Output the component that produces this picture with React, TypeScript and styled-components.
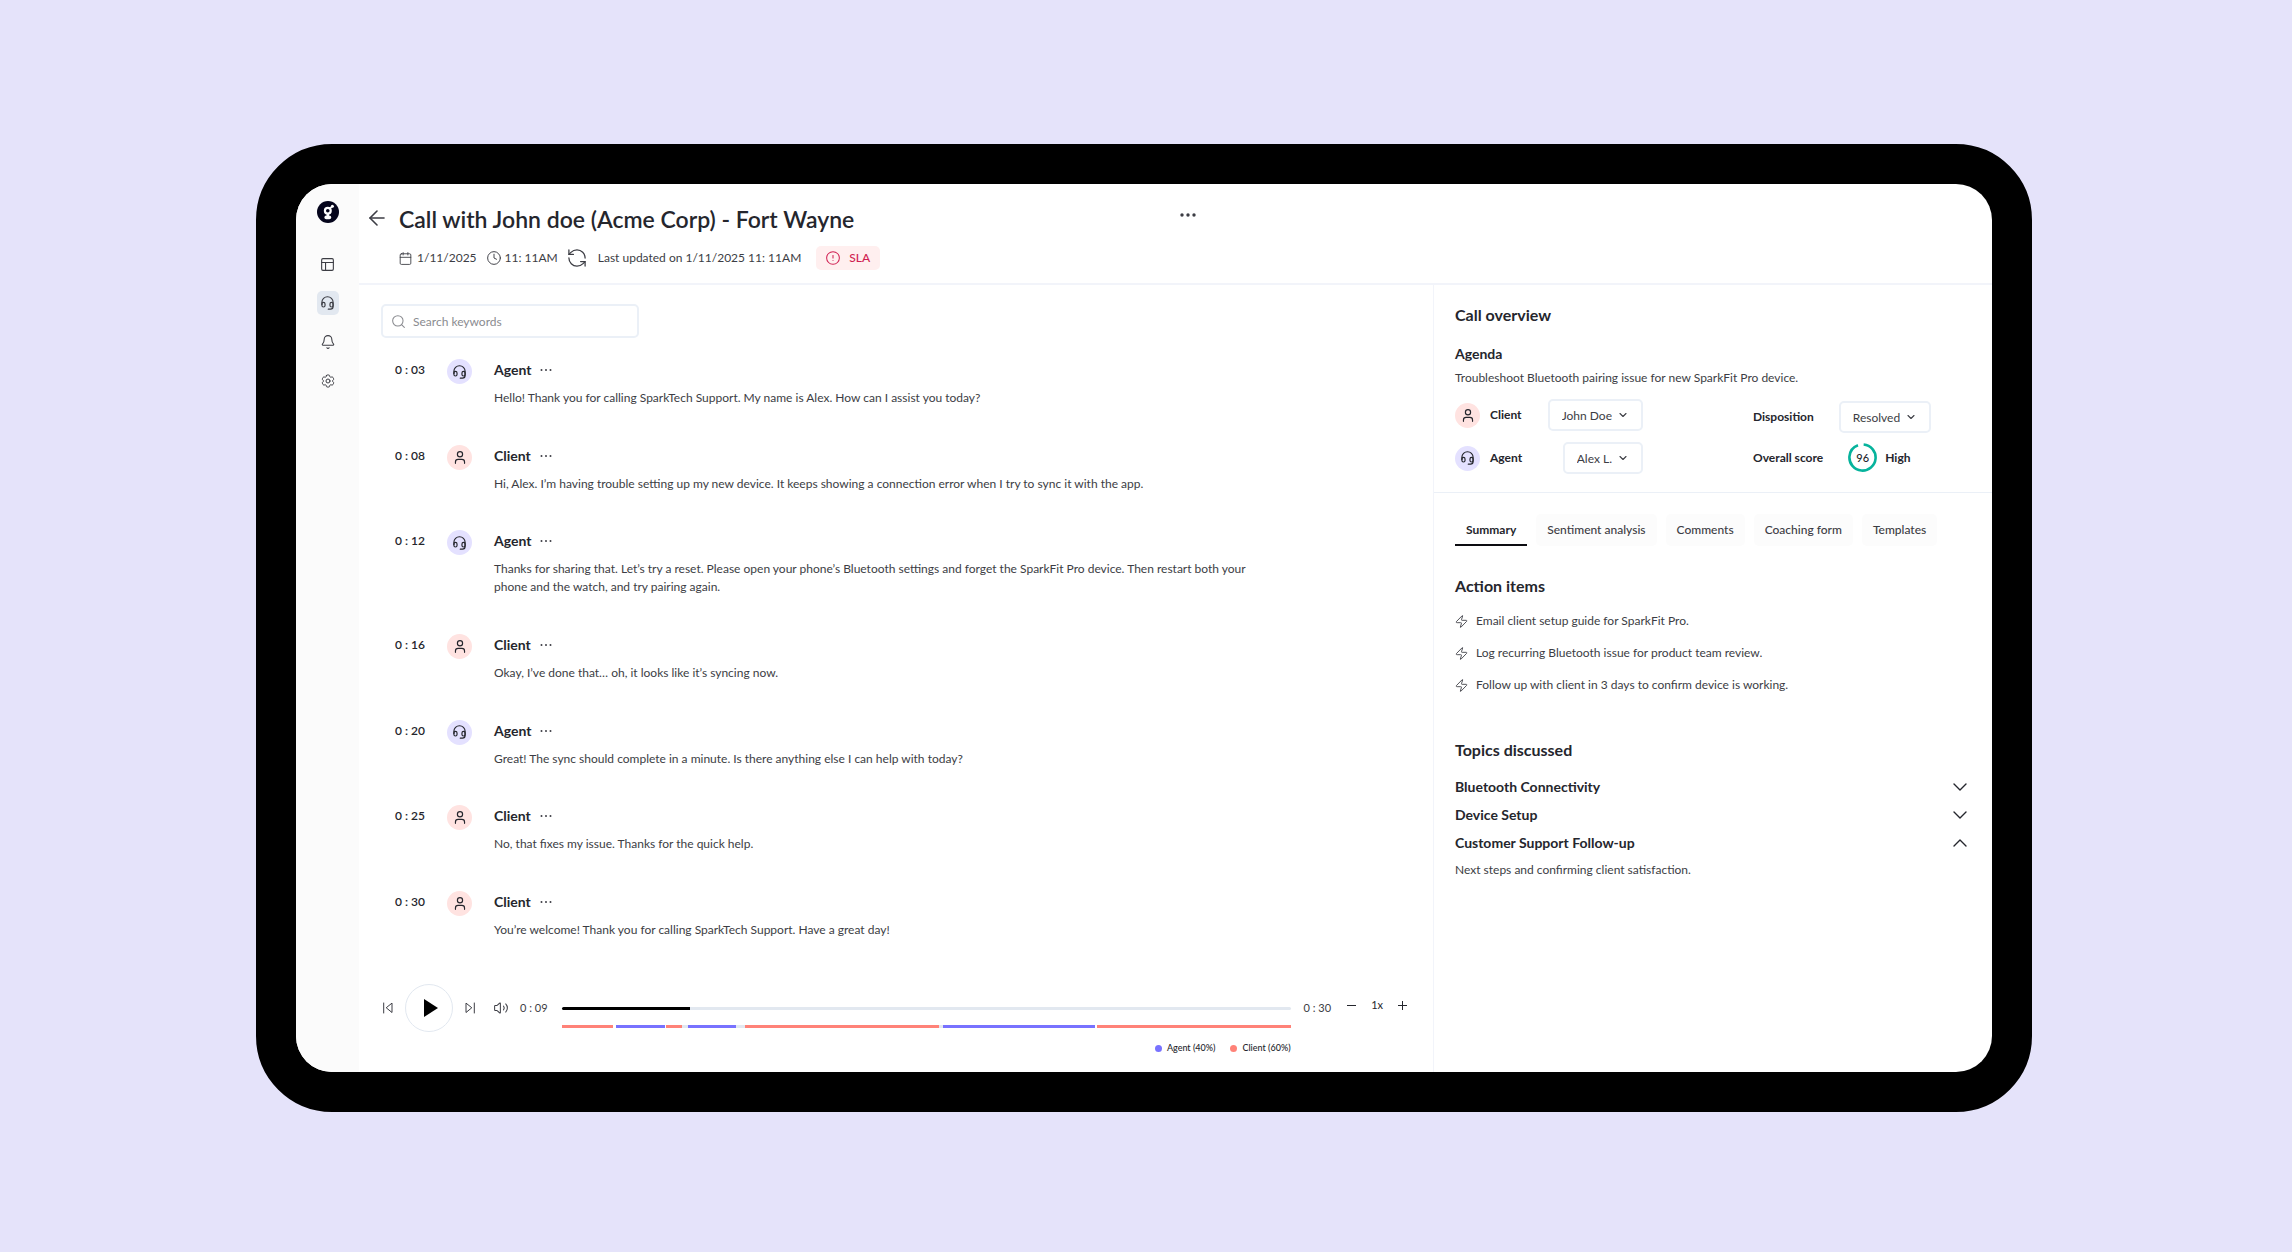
import React, { useState } from "react";
import styled, { createGlobalStyle, css } from "styled-components";
import {
  ArrowLeft,
  Bell,
  Calendar,
  CircleAlert,
  Clock,
  PanelsTopLeft,
  RefreshCcw,
  Search,
  User,
  Volume2,
  Zap,
} from "lucide-react";
import { HiOutlineCog6Tooth } from "react-icons/hi2";

type Speaker = "Agent" | "Client";
type SegmentKind = "agent" | "client" | "idle" | "gap";

const color = {
  backdrop: "#e5e3fa",
  ink: "#25262d",
  text: "#3c3d44",
  muted: "#8a8b90",
  line: "#f2f4fa",
  outline: "#ebf0f7",
  track: "#e2e8f0",
  agent: "#7872ff",
  client: "#ff8278",
  agentSoft: "#e4e1ff",
  clientSoft: "#ffe3e1",
  danger: "#d01f52",
  dangerSoft: "#ffefef",
  score: "#06b39c",
};

const messages: { time: string; speaker: Speaker; text: string }[] = [
  {
    time: "0 : 03",
    speaker: "Agent",
    text: "Hello! Thank you for calling SparkTech Support. My name is Alex. How can I assist you today?",
  },
  {
    time: "0 : 08",
    speaker: "Client",
    text: "Hi, Alex. I’m having trouble setting up my new device. It keeps showing a connection error when I try to sync it with the app.",
  },
  {
    time: "0 : 12",
    speaker: "Agent",
    text: "Thanks for sharing that. Let’s try a reset. Please open your phone’s Bluetooth settings and forget the SparkFit Pro device. Then restart both your phone and the watch, and try pairing again.",
  },
  { time: "0 : 16", speaker: "Client", text: "Okay, I’ve done that… oh, it looks like it’s syncing now." },
  {
    time: "0 : 20",
    speaker: "Agent",
    text: "Great! The sync should complete in a minute. Is there anything else I can help with today?",
  },
  { time: "0 : 25", speaker: "Client", text: "No, that fixes my issue. Thanks for the quick help." },
  {
    time: "0 : 30",
    speaker: "Client",
    text: "You’re welcome! Thank you for calling SparkTech Support. Have a great day!",
  },
];

const segments: { kind: SegmentKind; span: number }[] = [
  { kind: "client", span: 51 },
  { kind: "gap", span: 3 },
  { kind: "agent", span: 49 },
  { kind: "gap", span: 1 },
  { kind: "client", span: 16 },
  { kind: "idle", span: 6 },
  { kind: "agent", span: 48 },
  { kind: "idle", span: 9 },
  { kind: "client", span: 193 },
  { kind: "idle", span: 4 },
  { kind: "agent", span: 152 },
  { kind: "gap", span: 2 },
  { kind: "client", span: 193 },
];

const tabs = ["Summary", "Sentiment analysis", "Comments", "Coaching form", "Templates"];

const actionItems = [
  "Email client setup guide for SparkFit Pro.",
  "Log recurring Bluetooth issue for product team review.",
  "Follow up with client in 3 days to confirm device is working.",
];

const topics = [
  { title: "Bluetooth Connectivity", note: "Pairing and reconnecting the device over Bluetooth." },
  { title: "Device Setup", note: "Setting up the new device with the app." },
  { title: "Customer Support Follow-up", note: "Next steps and confirming client satisfaction." },
];

const GlobalStyle = createGlobalStyle`
  *, *::before, *::after { box-sizing: border-box; }
  body { margin: 0; background: ${color.backdrop}; }
  body, button, input, select { font-family: Lato, "Open Sans", sans-serif; }
  h1, h2, h3, p, ul, dl, dd { margin: 0; padding: 0; }
  ul { list-style: none; }
  svg { display: block; flex: none; }
`;

/* Frame */

const Stage = styled.div`
  display: flex;
  min-height: 100vh;
  padding: 144px 260px 140px 256px;
  background: ${color.backdrop};
`;

const Device = styled.div`
  flex: 1;
  display: flex;
  min-width: 0;
  border: 40px solid #000;
  border-radius: 76px;
  background: #000;
`;

const Screen = styled.div`
  flex: 1;
  display: grid;
  grid-template-columns: 63px minmax(0, 1fr);
  min-width: 0;
  overflow: hidden;
  border-radius: 36px;
  background: #fff;
  color: ${color.text};
  font-size: 12px;
  font-weight: 400;
  line-height: 18px;
`;

const PlainButton = styled.button`
  display: flex;
  align-items: center;
  justify-content: center;
  padding: 0;
  border: 0;
  background: none;
  color: inherit;
  cursor: pointer;
`;

/* Sidebar */

const Sidebar = styled.nav`
  display: flex;
  flex-direction: column;
  align-items: center;
  gap: 15px;
  padding: 17px 0 18px;
  background: #fbfbfb;
`;

const LogoLink = styled.a`
  margin-bottom: 14px;
`;

const NavButton = styled(PlainButton)<{ $active?: boolean }>`
  width: 22px;
  height: 24px;
  border-radius: 5px;
  background: ${(p) => (p.$active ? color.track : "transparent")};
`;

/* Header */

const Workspace = styled.div`
  display: flex;
  flex-direction: column;
  min-width: 0;
`;

const Header = styled.header`
  display: grid;
  grid-template-columns: minmax(0, 1fr) 559px;
  border-bottom: 2px solid ${color.line};
`;

const HeaderMain = styled.div`
  display: flex;
  justify-content: space-between;
  padding: 21px 237px 13px 11px;
`;

const Heading = styled.div`
  display: grid;
  grid-template-columns: 14px auto;
  column-gap: 15px;
  row-gap: 13px;
`;

const BackButton = styled(PlainButton)`
  height: 26px;
`;

const Title = styled.h1`
  color: ${color.ink};
  font-size: 23px;
  font-weight: 600;
  line-height: 28px;
  white-space: nowrap;
`;

const MoreButton = styled(PlainButton)`
  align-self: flex-start;
  height: 20px;
`;

const Meta = styled.div`
  grid-column: 2;
  display: flex;
  align-items: center;
  gap: 10px;
  height: 24px;
  white-space: nowrap;
`;

const MetaItem = styled.span<{ $gap: number }>`
  display: flex;
  align-items: center;
  gap: ${(p) => p.$gap}px;
`;

const SlaBadge = styled.span`
  display: flex;
  align-items: center;
  gap: 9px;
  height: 24px;
  margin-left: 5px;
  padding: 0 10px;
  border-radius: 5px;
  background: ${color.dangerSoft};
  color: ${color.danger};
  font-weight: 500;
`;

/* Transcript */

const Body = styled.div`
  flex: 1;
  display: grid;
  grid-template-columns: minmax(0, 1fr) 559px;
`;

const Main = styled.main`
  display: flex;
  flex-direction: column;
  min-width: 0;
  padding: 19px 26px 18px 22px;
`;

const SearchBox = styled.label`
  display: flex;
  align-items: center;
  gap: 8px;
  width: 258px;
  height: 34px;
  padding: 0 9px;
  border: 2px solid ${color.outline};
  border-radius: 5px;
  color: ${color.muted};
`;

const SearchInput = styled.input`
  flex: 1;
  min-width: 0;
  padding: 0;
  border: 0;
  outline: 0;
  background: none;
  color: ${color.text};
  font-size: 12px;
  &::placeholder {
    color: ${color.muted};
    opacity: 1;
  }
`;

const Transcript = styled.ul`
  flex: 1;
  display: flex;
  flex-direction: column;
  justify-content: space-between;
  gap: 20px;
  margin: 21px 0 45px;
  padding-left: 14px;
`;

const Message = styled.li`
  display: grid;
  grid-template-columns: 52px 47px minmax(0, 780px);
`;

const Timestamp = styled.time`
  color: ${color.ink};
  font-weight: 600;
  line-height: 21px;
`;

const Avatar = styled.span<{ $speaker: Speaker }>`
  display: flex;
  align-items: center;
  justify-content: center;
  width: 25px;
  height: 25px;
  border-radius: 50%;
  background: ${(p) => (p.$speaker === "Agent" ? color.agentSoft : color.clientSoft)};
  color: ${color.ink};
`;

const MessageHead = styled.div`
  display: flex;
  align-items: center;
  gap: 9px;
  height: 22px;
  margin-bottom: 8px;
`;

const SpeakerName = styled.h3`
  color: ${color.ink};
  font-size: 14px;
  font-weight: 700;
  line-height: 18px;
`;

/* Player */

const Player = styled.div`
  display: flex;
  align-items: flex-start;
  padding-left: 2px;
`;

const Transport = styled.div`
  display: flex;
  align-items: center;
  gap: 12px;
  height: 48px;
`;

const PlayButton = styled(PlainButton)`
  width: 48px;
  height: 48px;
  padding-left: 4px;
  border: 1px solid ${color.track};
  border-radius: 50%;
  color: #000;
`;

const VolumeButton = styled(PlainButton)`
  margin-left: 7px;
`;

const Clocktime = styled.time`
  font-size: 11px;
  line-height: 48px;
  white-space: nowrap;
`;

const Timeline = styled.div`
  flex: 1;
  display: flex;
  flex-direction: column;
  min-width: 0;
  margin: 0 13px 0 14px;
  padding-top: 23px;
`;

const Seek = styled.input`
  appearance: none;
  display: block;
  width: 100%;
  height: 3px;
  margin: 0 0 15px;
  border-radius: 2px;
  background: linear-gradient(to right, #000 var(--played), ${color.track} var(--played));
  cursor: pointer;
  &::-webkit-slider-thumb {
    appearance: none;
    width: 0;
    height: 3px;
  }
`;

const SegmentBar = styled.div`
  display: flex;
  height: 3px;
  margin-bottom: 14px;
`;

const segmentFill: Record<SegmentKind, string> = {
  agent: color.agent,
  client: color.client,
  idle: color.track,
  gap: "transparent",
};

const Segment = styled.span<{ $kind: SegmentKind; $span: number }>`
  flex: ${(p) => p.$span} 0 0;
  background: ${(p) => segmentFill[p.$kind]};
`;

const Legend = styled.div`
  display: flex;
  justify-content: flex-end;
  gap: 15px;
  color: ${color.ink};
  font-size: 9px;
  font-weight: 500;
  line-height: 12px;
`;

const LegendItem = styled.span<{ $fill: string }>`
  display: flex;
  align-items: center;
  gap: 5px;
  &::before {
    content: "";
    width: 7px;
    height: 7px;
    border-radius: 50%;
    background: ${(p) => p.$fill};
  }
`;

const Speed = styled.div`
  display: flex;
  align-items: center;
  gap: 15px;
  height: 42px;
  margin-left: 16px;
  color: ${color.ink};
  font-size: 11px;
`;

/* Side panel */

const Panel = styled.aside`
  border-left: 1px solid ${color.line};
`;

const Overview = styled.section`
  padding: 20px 25px 18px 21px;
  border-bottom: 1px solid ${color.outline};
`;

const SectionTitle = styled.h2`
  color: ${color.ink};
  font-size: 16px;
  font-weight: 700;
  line-height: 20px;
`;

const AgendaTitle = styled.h3`
  margin: 20px 0 7px;
  color: ${color.ink};
  font-size: 14px;
  font-weight: 700;
  line-height: 18px;
`;

const Paragraph = styled.p`
  line-height: 16px;
`;

const Facts = styled.div`
  display: flex;
  gap: 110px;
  margin-top: 13px;
`;

const People = styled.div`
  display: grid;
  gap: 11px;
  width: 188px;
`;

const Person = styled.div`
  display: flex;
  align-items: center;
  gap: 10px;
`;

const Outcome = styled.div`
  display: grid;
  align-content: start;
  gap: 10px;
  padding-top: 2px;
`;

const OutcomeRow = styled.div`
  display: flex;
  align-items: center;
  gap: 25px;
`;

const factLabel = css`
  color: ${color.ink};
  font-size: 12px;
  font-weight: 700;
`;

const FactLabel = styled.label`
  ${factLabel}
`;

const FactText = styled.span`
  ${factLabel}
`;

const Picker = styled.span`
  display: inline-grid;
  align-items: center;
  justify-items: end;
  height: 32px;
  border: 2px solid ${color.outline};
  border-radius: 5px;
  & > * {
    grid-area: 1 / 1;
  }
  & > svg {
    margin-right: 14px;
    pointer-events: none;
  }
  ${Person} & {
    margin-left: auto;
  }
`;

const PickerSelect = styled.select`
  appearance: none;
  field-sizing: content;
  height: 28px;
  padding: 0 29px 0 12px;
  border: 0;
  outline: 0;
  background: none;
  color: ${color.text};
  font-size: 12px;
`;

const Score = styled.span`
  display: flex;
  align-items: center;
  gap: 8px;
`;

const Ring = styled.span`
  display: grid;
  place-items: center;
  color: ${color.ink};
  font-size: 11px;
  font-weight: 500;
  & > * {
    grid-area: 1 / 1;
  }
`;

const Details = styled.section`
  padding: 21px 25px 21px 21px;
`;

const TabList = styled.div`
  display: flex;
  gap: 9px;
  margin-bottom: 30px;
`;

const Tab = styled.button<{ $active: boolean }>`
  height: 32px;
  padding: 2px 11px 0;
  border: 0;
  border-bottom: 2px solid ${(p) => (p.$active ? "#0d0d12" : "transparent")};
  border-radius: ${(p) => (p.$active ? "0" : "5px")};
  background: ${(p) => (p.$active ? "#fff" : "#fcfcfc")};
  color: ${(p) => (p.$active ? color.ink : color.text)};
  font-size: 12px;
  font-weight: ${(p) => (p.$active ? 700 : 500)};
  line-height: 18px;
  white-space: nowrap;
  cursor: pointer;
`;

const ActionList = styled.ul`
  display: grid;
  gap: 16px;
  margin: 17px 0 47px;
`;

const ActionItem = styled.li`
  display: flex;
  align-items: center;
  gap: 8px;
  line-height: 16px;
`;

const TopicList = styled.div`
  display: grid;
  gap: 10px;
  margin-top: 18px;
`;

const TopicButton = styled(PlainButton)`
  justify-content: space-between;
  width: 100%;
  color: ${color.ink};
  font-size: 14px;
  font-weight: 700;
  line-height: 18px;
`;

/* Drawings */

function Logo() {
  return (
    <svg width="22" height="22" viewBox="0 0 22 22" aria-hidden="true">
      <circle cx="11" cy="11" r="11" fill="#05051c" />
      <circle cx="10.8" cy="9.8" r="2.9" fill="none" stroke="#fff" strokeWidth="2.2" />
      <path d="M13 7.4 15 5.6" stroke="#fff" strokeWidth="1.6" strokeLinecap="round" />
      <circle cx="15.4" cy="5.2" r="1.5" fill="#fff" />
      <path d="M10.8 13v2" stroke="#fff" strokeWidth="2.4" />
      <rect x="7.4" y="14.4" width="6.8" height="3.8" rx="1.8" fill="#fff" />
      <circle cx="10.8" cy="9.8" r="0.8" fill="#05051c" />
    </svg>
  );
}

function HeadsetIcon() {
  return (
    <svg
      width="13"
      height="14"
      viewBox="2 1.5 20 21.5"
      fill="none"
      stroke="currentColor"
      strokeWidth="1.8"
      strokeLinecap="round"
      strokeLinejoin="round"
      aria-hidden="true"
    >
      <path d="M3.4 14.5v-3.3a8.6 8.6 0 0 1 17.2 0v6.6a4 4 0 0 1-4 4h-3.4" />
      <rect x="3.4" y="11.4" width="4.8" height="7" rx="2.4" />
      <rect x="15.8" y="11.4" width="4.8" height="7" rx="2.4" />
    </svg>
  );
}

function SkipIcon({ forward = false }: { forward?: boolean }) {
  return (
    <svg
      width="10"
      height="12"
      viewBox="0 0 10 12"
      fill="none"
      stroke="currentColor"
      strokeLinecap="round"
      strokeLinejoin="round"
      aria-hidden="true"
    >
      <path d={forward ? "M1 1.5v9L6.5 6ZM9.3 1v10" : "M9 1.5v9L3.5 6ZM.7 1v10"} />
    </svg>
  );
}

function Dots({ width, radius }: { width: number; radius: number }) {
  return (
    <svg width={width} height="4" viewBox="0 0 16 4" fill="currentColor" aria-hidden="true">
      <circle cx="2" cy="2" r={radius} />
      <circle cx="8" cy="2" r={radius} />
      <circle cx="14" cy="2" r={radius} />
    </svg>
  );
}

function Chevron({ width, up = false }: { width: number; up?: boolean }) {
  return (
    <svg
      width={width}
      height="8"
      viewBox={width > 8 ? "0 0 14 8" : "0 0 8 8"}
      fill="none"
      stroke="currentColor"
      strokeWidth={width > 8 ? 1.4 : 1.1}
      strokeLinecap="round"
      strokeLinejoin="round"
      aria-hidden="true"
    >
      <path d={width > 8 ? (up ? "M1 7 7 1l6 6" : "m1 1 6 6 6-6") : "M1 2.5 4 5.5l3-3"} />
    </svg>
  );
}

function ScoreRing() {
  return (
    <svg width="29" height="29" viewBox="0 0 29 29" fill="none" aria-hidden="true">
      <circle
        cx="14.5"
        cy="14.5"
        r="13.1"
        stroke={color.score}
        strokeWidth="2.6"
        pathLength="100"
        strokeDasharray="93 7"
        transform="rotate(-85 14.5 14.5)"
      />
    </svg>
  );
}

function SpeakerAvatar({ speaker }: { speaker: Speaker }) {
  return (
    <Avatar $speaker={speaker}>
      {speaker === "Agent" ? (
        <HeadsetIcon />
      ) : (
        <User width={12} height={13} viewBox="3 2 18 20" strokeWidth={1.8} />
      )}
    </Avatar>
  );
}

function PickerField({ id, options }: { id: string; options: string[] }) {
  return (
    <Picker>
      <PickerSelect id={id} defaultValue={options[0]}>
        {options.map((option) => (
          <option key={option}>{option}</option>
        ))}
      </PickerSelect>
      <Chevron width={8} />
    </Picker>
  );
}

export default function App() {
  const [tab, setTab] = useState(tabs[0]);
  const [open, setOpen] = useState<string | null>(topics[2].title);
  const [played, setPlayed] = useState(17.5);

  return (
    <>
      <GlobalStyle />
      <Stage>
        <Device>
          <Screen>
            <Sidebar aria-label="Main">
              <LogoLink href="#" aria-label="Home">
                <Logo />
              </LogoLink>
              <NavButton aria-label="Dashboard">
                <PanelsTopLeft size={13} viewBox="2 2 20 20" strokeWidth={1.7} />
              </NavButton>
              <NavButton $active aria-label="Calls">
                <HeadsetIcon />
              </NavButton>
              <NavButton aria-label="Notifications">
                <Bell size={14} viewBox="1 1 22 22" strokeWidth={1.7} />
              </NavButton>
              <NavButton aria-label="Settings">
                <HiOutlineCog6Tooth size={16} />
              </NavButton>
            </Sidebar>

            <Workspace>
              <Header>
                <HeaderMain>
                  <Heading>
                    <BackButton aria-label="Back">
                      <ArrowLeft size={16} viewBox="4 4 16 16" strokeWidth={1.6} />
                    </BackButton>
                    <Title>Call with John doe (Acme Corp) - Fort Wayne</Title>
                    <Meta>
                      <MetaItem $gap={5}>
                        <Calendar size={13} viewBox="2 1 20 22" strokeWidth={1.5} />
                        1/11/2025
                      </MetaItem>
                      <MetaItem $gap={4}>
                        <Clock size={14} viewBox="1 1 22 22" strokeWidth={1.5} />
                        11: 11AM
                      </MetaItem>
                      <MetaItem $gap={12}>
                        <RefreshCcw size={18} viewBox="2 2 20 20" strokeWidth={1.4} />
                        Last updated on 1/11/2025 11: 11AM
                      </MetaItem>
                      <SlaBadge>
                        <CircleAlert size={14} viewBox="1 1 22 22" strokeWidth={1.6} />
                        SLA
                      </SlaBadge>
                    </Meta>
                  </Heading>
                  <MoreButton aria-label="More call actions">
                    <Dots width={16} radius={1.7} />
                  </MoreButton>
                </HeaderMain>
              </Header>

              <Body>
                <Main>
                  <SearchBox>
                    <Search size={13} viewBox="2 2 20 20" strokeWidth={1.6} />
                    <SearchInput type="search" placeholder="Search keywords" aria-label="Search keywords" />
                  </SearchBox>

                  <Transcript>
                    {messages.map((m) => (
                      <Message key={m.time}>
                        <Timestamp>{m.time}</Timestamp>
                        <SpeakerAvatar speaker={m.speaker} />
                        <div>
                          <MessageHead>
                            <SpeakerName>{m.speaker}</SpeakerName>
                            <PlainButton aria-label="Message actions">
                              <Dots width={12} radius={1.3} />
                            </PlainButton>
                          </MessageHead>
                          <p>{m.text}</p>
                        </div>
                      </Message>
                    ))}
                  </Transcript>

                  <Player>
                    <Transport>
                      <PlainButton aria-label="Previous">
                        <SkipIcon />
                      </PlainButton>
                      <PlayButton aria-label="Play">
                        <svg width="14" height="18" viewBox="0 0 14 18" fill="currentColor" aria-hidden="true">
                          <path d="M0 0 14 9 0 18Z" />
                        </svg>
                      </PlayButton>
                      <PlainButton aria-label="Next">
                        <SkipIcon forward />
                      </PlainButton>
                      <VolumeButton aria-label="Volume">
                        <Volume2 size={14} viewBox="1 1 22 22" strokeWidth={1.6} />
                      </VolumeButton>
                      <Clocktime>0 : 09</Clocktime>
                    </Transport>
                    <Timeline>
                      <Seek
                        type="range"
                        min={0}
                        max={100}
                        step={0.5}
                        value={played}
                        aria-label="Playback position"
                        onChange={(e) => setPlayed(Number(e.target.value))}
                        style={{ "--played": `${played}%` } as React.CSSProperties}
                      />
                      <SegmentBar>
                        {segments.map((s, i) => (
                          <Segment key={i} $kind={s.kind} $span={s.span} />
                        ))}
                      </SegmentBar>
                      <Legend>
                        <LegendItem $fill={color.agent}>Agent (40%)</LegendItem>
                        <LegendItem $fill={color.client}>Client (60%)</LegendItem>
                      </Legend>
                    </Timeline>
                    <Clocktime>0 : 30</Clocktime>
                    <Speed>
                      <PlainButton aria-label="Slower">
                        <svg width="9" height="9" viewBox="0 0 9 9" stroke="currentColor" aria-hidden="true">
                          <path d="M0 4.5h9" />
                        </svg>
                      </PlainButton>
                      <span>1x</span>
                      <PlainButton aria-label="Faster">
                        <svg width="9" height="9" viewBox="0 0 9 9" stroke="currentColor" aria-hidden="true">
                          <path d="M0 4.5h9M4.5 0v9" />
                        </svg>
                      </PlainButton>
                    </Speed>
                  </Player>
                </Main>

                <Panel>
                  <Overview>
                    <SectionTitle>Call overview</SectionTitle>
                    <AgendaTitle>Agenda</AgendaTitle>
                    <Paragraph>Troubleshoot Bluetooth pairing issue for new SparkFit Pro device.</Paragraph>
                    <Facts>
                      <People>
                        <Person>
                          <SpeakerAvatar speaker="Client" />
                          <FactLabel htmlFor="client">Client</FactLabel>
                          <PickerField id="client" options={["John Doe"]} />
                        </Person>
                        <Person>
                          <SpeakerAvatar speaker="Agent" />
                          <FactLabel htmlFor="agent">Agent</FactLabel>
                          <PickerField id="agent" options={["Alex L."]} />
                        </Person>
                      </People>
                      <Outcome>
                        <OutcomeRow>
                          <FactLabel htmlFor="disposition">Disposition</FactLabel>
                          <PickerField id="disposition" options={["Resolved"]} />
                        </OutcomeRow>
                        <OutcomeRow>
                          <FactText>Overall score</FactText>
                          <Score>
                            <Ring>
                              <ScoreRing />
                              <span>96</span>
                            </Ring>
                            <FactText>High</FactText>
                          </Score>
                        </OutcomeRow>
                      </Outcome>
                    </Facts>
                  </Overview>

                  <Details>
                    <TabList role="tablist">
                      {tabs.map((name) => (
                        <Tab
                          key={name}
                          role="tab"
                          aria-selected={tab === name}
                          $active={tab === name}
                          onClick={() => setTab(name)}
                        >
                          {name}
                        </Tab>
                      ))}
                    </TabList>

                    <SectionTitle>Action items</SectionTitle>
                    <ActionList>
                      {actionItems.map((item) => (
                        <ActionItem key={item}>
                          <Zap size={13} viewBox="1 1 22 22" strokeWidth={1.5} />
                          {item}
                        </ActionItem>
                      ))}
                    </ActionList>

                    <SectionTitle>Topics discussed</SectionTitle>
                    <TopicList>
                      {topics.map(({ title, note }) => (
                        <React.Fragment key={title}>
                          <TopicButton
                            aria-expanded={open === title}
                            onClick={() => setOpen(open === title ? null : title)}
                          >
                            {title}
                            <Chevron width={14} up={open === title} />
                          </TopicButton>
                          {open === title && <Paragraph>{note}</Paragraph>}
                        </React.Fragment>
                      ))}
                    </TopicList>
                  </Details>
                </Panel>
              </Body>
            </Workspace>
          </Screen>
        </Device>
      </Stage>
    </>
  );
}
